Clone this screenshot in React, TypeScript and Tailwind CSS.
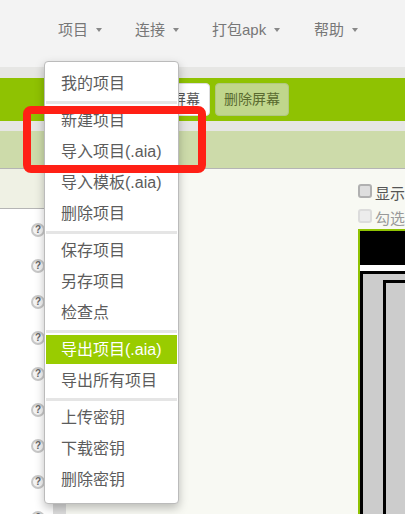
const FONT = "font-['Liberation_Sans','Noto_Sans_CJK_SC',sans-serif]";

function Caret() {
  return <span className="ml-[8px] inline-block w-0 h-0 border-x-[3px] border-x-transparent border-t-[4px] border-t-[#888]" />;
}

function NavItem({ label, w }: { label: string; w: string }) {
  return (
    <div className={`flex items-center text-[15px] text-[#777] ${w}`}>
      <span>{label}</span>
      <Caret />
    </div>
  );
}

function Sep() {
  return (
    <div className="h-[6px] pt-[2px]">
      <div className="h-[3px] bg-[#e5e5e5]" />
    </div>
  );
}

function Item({ label, active }: { label: string; active?: boolean }) {
  return (
    <div className="h-[31px] py-[1px]">
      <div className={`h-[29px] pl-[15px] flex items-center text-[16px] whitespace-nowrap ${active ? "bg-[#99cc00] text-white" : "text-[#5c5c5c]"}`}>
        {label}
      </div>
    </div>
  );
}

function Help() {
  return (
    <div className="w-[14px] h-[14px] shrink-0 rounded-full border-2 border-[#c8c8c8] bg-[#f4f4f4] text-[#666] text-[10px] font-bold leading-[10px] text-center">?</div>
  );
}

function Check({ disabled, label }: { disabled?: boolean; label: string }) {
  return (
    <div className={`flex items-center gap-[3px] h-[14px] text-[15px] whitespace-nowrap ${disabled ? "text-[#999]" : "text-[#555]"}`}>
      <input
        type="checkbox"
        readOnly
        disabled={disabled}
        className={`appearance-none w-[14px] h-[14px] m-0 shrink-0 rounded-[3px] border-2 ${disabled ? "border-[#dcdcdc] bg-[#ececec]" : "border-[#b0b0b0] bg-[#dedede]"}`}
      />
      <span className="mt-[6px]">{label}</span>
    </div>
  );
}

export default function App() {
  return (
    <div className={`${FONT} relative w-[405px] h-[514px] overflow-hidden bg-[#f8f9f3]`}>
      <div className="h-[67px] bg-[#f3f3f3] flex items-center pl-[58px] pb-[7px]">
        <NavItem label="项目" w="w-[77px]" />
        <NavItem label="连接" w="w-[77px]" />
        <NavItem label="打包apk" w="w-[102px]" />
        <NavItem label="帮助" w="w-[90px]" />
      </div>
      <div className="h-[11px] bg-[#e6e6e4]" />
      <div className="h-[43px] bg-[#8fc202] flex items-center pl-[170px] gap-[5px]">
        <div className="w-[40px] h-[33px] bg-white rounded-[4px] border border-[#ddd] text-[#555] text-[14px] flex items-center justify-end pr-[9px] whitespace-nowrap">屏幕</div>
        <div className="w-[74px] h-[33px] rounded-[4px] bg-[#c0d68c] border border-[#b0c880] text-[#5a6b30] text-[14px] flex items-center justify-center">删除屏幕</div>
      </div>
      <div className="h-[10px] bg-[#e6e6e4]" />
      <div className="h-[37px] bg-[#cddbaa]" />
      <div className="h-[346px] flex border-t border-[#b5b5b5]">
        <div className="w-[53px] shrink-0 flex flex-col overflow-hidden">
          <div className="h-[40px] shrink-0 bg-[#eff1e4] border-b border-[#b5b5b5]" />
          <div className="flex-1 bg-white flex flex-col items-end pt-[14px] gap-[22px] pr-[8px]">
            <Help /><Help /><Help /><Help /><Help /><Help /><Help /><Help /><Help />
          </div>
        </div>
        <div className="w-[13px] bg-[#dcdcdc] shrink-0" />
        <div className="flex-1 flex flex-col items-end">
          <div className="w-[47px] pt-[15px] flex flex-col">
            <Check label="显示" />
            <div className="h-[11px]" />
            <Check disabled label="勾选" />
            <div className="h-[285px] border-l-2 border-t-2 border-[#8fc202] mt-[6px] flex flex-col">
              <div className="h-[34px] bg-black shrink-0" />
              <div className="h-[6px] bg-white shrink-0" />
              <div className="flex-1 bg-black pl-[3px] pt-[3px]">
                <div className="h-full bg-[#cccccc] pl-[20px] pt-[6px]">
                  <div className="h-full bg-black pl-[3px] pt-[3px]">
                    <div className="h-full bg-[#cccccc]" />
                  </div>
                </div>
              </div>
            </div>
          </div>
        </div>
      </div>

      <div className="absolute left-[44px] top-[61px] w-[135px] h-[443px] bg-white border border-[#bbb] rounded-[4px] shadow-[0_4px_10px_rgba(0,0,0,0.25)] px-[1px] pt-[6px]">
        <Item label="我的项目" />
        <Sep />
        <Item label="新建项目" />
        <Item label="导入项目(.aia)" />
        <Item label="导入模板(.aia)" />
        <Item label="删除项目" />
        <Sep />
        <Item label="保存项目" />
        <Item label="另存项目" />
        <Item label="检查点" />
        <Sep />
        <Item label="导出项目(.aia)" active />
        <Item label="导出所有项目" />
        <Sep />
        <Item label="上传密钥" />
        <Item label="下载密钥" />
        <Item label="删除密钥" />
      </div>

      <div className="absolute left-[23px] top-[106px] w-[183px] h-[67px] border-[8px] border-[#ff2015] rounded-[8px]" />
    </div>
  );
}
